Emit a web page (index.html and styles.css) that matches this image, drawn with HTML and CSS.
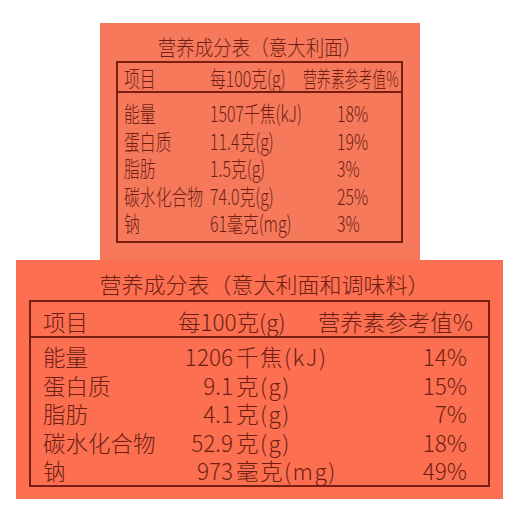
FILE: index.html
```html
<!DOCTYPE html>
<html lang="zh-CN">
<head>
<meta charset="utf-8">
<title>营养成分表</title>
<link rel="stylesheet" href="styles.css">
</head>
<body>
<section class="panel panel-a">
  <h2 class="title-a"><span class="cz-t">营养成分表（意大利面）</span></h2>
  <div class="box-a">
    <div class="head-a">
      <span class="cz">项目</span>
      <span class="cz">每100克(g)</span>
      <span class="cz cz-n">营养素参考值%</span>
    </div>
    <div class="rows-a">
      <div class="row-a"><span class="cz">能量</span><span class="cz">1507千焦(kJ)</span><span class="cz">18%</span></div>
      <div class="row-a"><span class="cz">蛋白质</span><span class="cz">11.4克(g)</span><span class="cz">19%</span></div>
      <div class="row-a"><span class="cz">脂肪</span><span class="cz">1.5克(g)</span><span class="cz">3%</span></div>
      <div class="row-a"><span class="cz">碳水化合物</span><span class="cz">74.0克(g)</span><span class="cz">25%</span></div>
      <div class="row-a"><span class="cz">钠</span><span class="cz">61毫克(mg)</span><span class="cz">3%</span></div>
    </div>
  </div>
</section>
<section class="panel panel-b">
  <h2 class="title-b">营养成分表（意大利面和调味料）</h2>
  <div class="box-b">
    <div class="head-b">
      <span class="hb-label">项目</span>
      <span class="hb-val">每100克(g)</span>
      <span class="hb-pct">营养素参考值%</span>
    </div>
    <div class="rows-b">
      <div class="row-b"><span>能量</span><span class="num">1206</span><span class="unit">千焦(kJ)</span><span class="pct">14%</span></div>
      <div class="row-b"><span>蛋白质</span><span class="num">9.1</span><span class="unit">克(g)</span><span class="pct">15%</span></div>
      <div class="row-b"><span>脂肪</span><span class="num">4.1</span><span class="unit">克(g)</span><span class="pct">7%</span></div>
      <div class="row-b"><span>碳水化合物</span><span class="num">52.9</span><span class="unit">克(g)</span><span class="pct">18%</span></div>
      <div class="row-b"><span>钠</span><span class="num">973</span><span class="unit">毫克(mg)</span><span class="pct">49%</span></div>
    </div>
  </div>
</section>
</body>
</html>
```

FILE: styles.css
```css
* { box-sizing: border-box; }
html, body {
  margin: 0;
  padding: 0;
  background: #ffffff;
}
body {
  width: 520px;
  height: 520px;
  overflow: hidden;
  font-family: "Noto Sans CJK SC", "Noto Sans", sans-serif;
  font-weight: 300;
  color: #6e1f15;
}
.panel { display: flex; flex-direction: column; }

/* top panel */
.panel-a {
  margin: 23px 0 0 100px;
  width: 320px;
  height: 237px;
  background: #f6795b;
  padding: 0 17px 0 16px;
}
.title-a {
  margin: 0;
  height: 38px;
  padding-top: 9px;
  font-size: 21px;
  font-weight: 300;
  line-height: 28px;
  text-align: center;
  white-space: nowrap;
}
.cz-t {
  display: inline-block;
  transform: scaleX(0.88);
}
.box-a {
  border: 2px solid #7a1d12;
  height: 182px;
}
.head-a {
  display: grid;
  grid-template-columns: 86px 93px 1fr;
  height: 30px;
  padding: 0 0 0 6px;
  border-bottom: 2px solid #7a1d12;
  font-size: 22px;
  line-height: 28px;
  white-space: nowrap;
}
.rows-a {
  padding-top: 6px;
}
.row-a {
  display: grid;
  grid-template-columns: 86px 127px 1fr;
  height: 27.5px;
  padding-left: 6px;
  font-size: 22px;
  line-height: 27.5px;
  white-space: nowrap;
}
.cz {
  display: inline-block;
  transform: scaleX(0.72);
  transform-origin: left center;
}
.cz-n {
  transform: scaleX(0.63);
}

/* bottom panel */
.panel-b {
  margin-left: 16px;
  width: 487px;
  height: 239px;
  background: #fc6f50;
  padding: 0 13px;
}
.title-b {
  margin: 0;
  height: 40px;
  padding: 8px 0 0 10px;
  font-size: 22px;
  font-weight: 300;
  line-height: 30px;
  text-align: center;
  white-space: nowrap;
}
.box-b {
  border: 2px solid #7a1d12;
  height: 187px;
}
.head-b {
  display: flex;
  height: 36px;
  padding: 4px 15px 0 12px;
  border-bottom: 2px solid #7a1d12;
  font-size: 22.5px;
  line-height: 30px;
  white-space: nowrap;
}
.hb-label { width: 135px; }
.hb-val { flex: 1; }
.rows-b { padding-top: 4px; }
.row-b {
  display: grid;
  grid-template-columns: 120px 70px auto 1fr;
  height: 28.5px;
  padding: 0 21px 0 12px;
  font-size: 22.5px;
  line-height: 28.5px;
  white-space: nowrap;
}
.num { text-align: right; }
.unit { padding-left: 3px; letter-spacing: 1.5px; }
.pct { text-align: right; }
```
